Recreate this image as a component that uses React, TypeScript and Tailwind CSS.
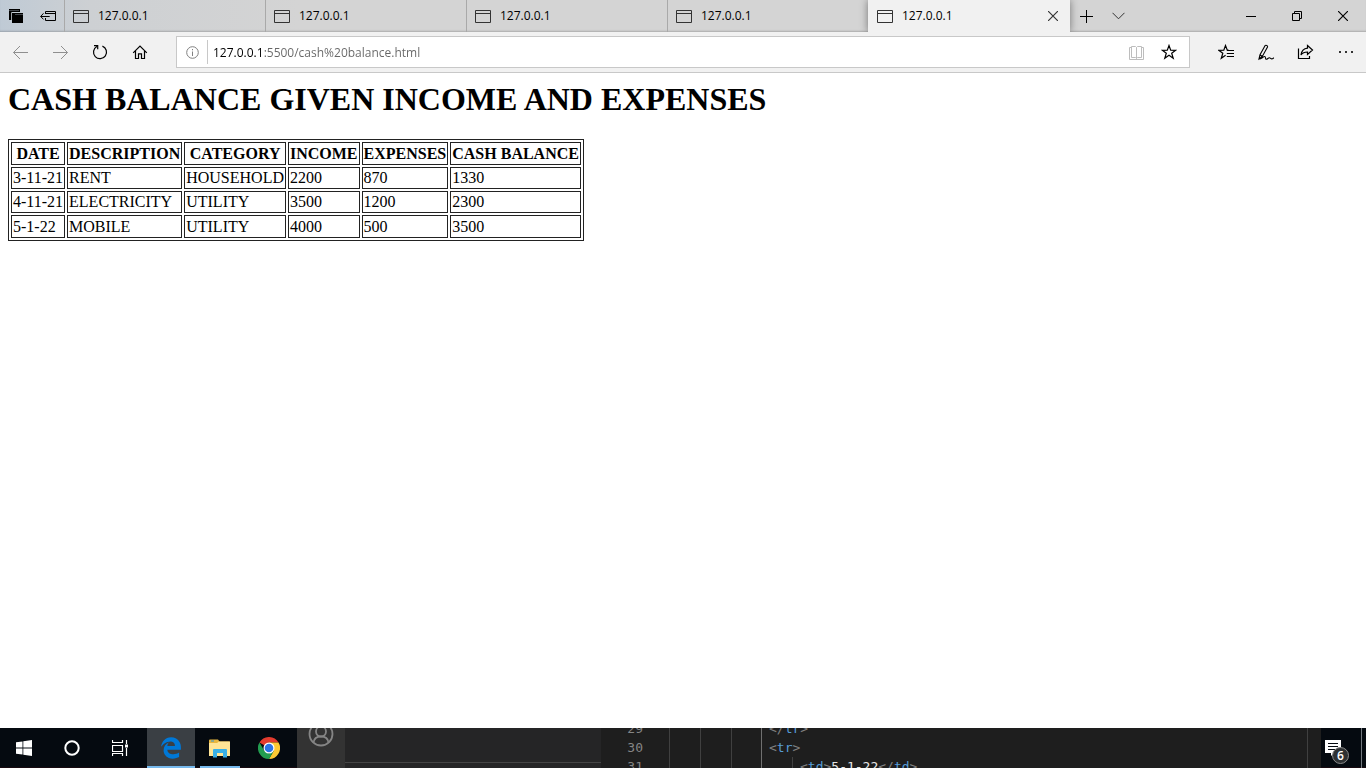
import React from "react";
import { FaEdgeLegacy } from "react-icons/fa6";

const stroke = { fill: "none", stroke: "currentColor" } as const;

function PageIcon() {
  return (
    <svg width="16" height="13" viewBox="0 0 16 13" className="shrink-0 text-[#333333]" {...stroke}>
      <path d="M.5 .5h15v12H.5zM.5 3.5h15" />
    </svg>
  );
}

function CloseIcon({ className = "" }: { className?: string }) {
  return (
    <svg width="10" height="10" viewBox="0 0 10 10" className={className} {...stroke} strokeWidth="1.150">
      <path d="M0 0l10 10M10 0L0 10" />
    </svg>
  );
}

function Tab({ title, active = false }: { title: string; active?: boolean }) {
  return (
    <div
      className={
        active
          ? "z-10 flex w-[202px] min-w-0 items-center border-l border-[#f1f1f1] bg-[#f1f1f1] pl-2 shadow-[0_0_8px_rgba(0,0,0,0.45)]"
          : "flex w-[201px] min-w-0 items-center border-l border-[#a9a9a9] pl-2"
      }
    >
      <button role="tab" aria-selected={active} className="flex flex-1 items-center gap-2 text-left text-xs text-black">
        <PageIcon />
        <span className="pl-px">{title}</span>
      </button>
      {active && (
        <button aria-label="Close tab" className="flex h-8 w-[34px] items-center justify-center">
          <CloseIcon className="text-[#333333]" />
        </button>
      )}
    </div>
  );
}

function TitleBar() {
  return (
    <header className="flex h-8 overflow-hidden bg-[linear-gradient(90deg,#bfcad5_0px,#cdd0d3_90px,#d4d4d4_300px)] shadow-[inset_0_-2px_2px_-1px_rgba(0,0,0,0.2)]">
      <button aria-label="Tabs you have set aside" className="flex w-8 items-center justify-center">
        <svg width="16" height="16" viewBox="0 0 16 16">
          <path d="M1 1h11v3H4v8H1z" fill="#000" />
          <path d="M4 5h11v10H4z" fill="#000" />
          <path d="M1 2.500h10M7 6.500h8" stroke="#6f767d" strokeWidth=".6" />
          <path d="M3.500 12V4.500h9" stroke="#c3cbd3" strokeWidth=".8" fill="none" />
        </svg>
      </button>
      <button aria-label="Set these tabs aside" className="flex w-8 items-center justify-center">
        <svg width="16" height="14" viewBox="0 0 16 14" {...stroke}>
          <path d="M5.500 5V2.500h10v9h-10V9M5.500 4.500h10M.7 7.500h9M3.500 4.300L.7 7.500l2.800 2.900" />
        </svg>
      </button>
      <div role="tablist" className="flex min-w-0">
        <Tab title="127.0.0.1" />
        <Tab title="127.0.0.1" />
        <Tab title="127.0.0.1" />
        <Tab title="127.0.0.1" />
        <Tab title="127.0.0.1" active />
      </div>
      <button aria-label="New tab" className="flex w-8 items-center justify-center">
        <svg width="13" height="13" viewBox="0 0 13 13" {...stroke}>
          <path d="M6.500 0v13M0 6.500h13" />
        </svg>
      </button>
      <button aria-label="Show tab previews" className="flex w-8 items-center justify-center">
        <svg width="13" height="8" viewBox="0 0 13 8" className="text-[#333333]" {...stroke}>
          <path d="M.5 .8l6 6 6-6" />
        </svg>
      </button>
      <div className="ml-auto flex">
        <button aria-label="Minimize" className="flex w-[46px] items-center justify-center">
          <svg width="10" height="1" viewBox="0 0 10 1"><path d="M0 0h10v1H0z" /></svg>
        </button>
        <button aria-label="Restore" className="flex w-[46px] items-center justify-center">
          <svg width="10" height="10" viewBox="0 0 10 10" {...stroke}>
            <path d="M.5 2.500h7v7h-7zM2.500 2.500v-2h7v7h-2" />
          </svg>
        </button>
        <button aria-label="Close window" className="flex w-[46px] items-center justify-center">
          <CloseIcon />
        </button>
      </div>
    </header>
  );
}

function ToolButton({ label, children }: { label: string; children: React.ReactNode }) {
  return (
    <button aria-label={label} className="flex h-10 w-10 shrink-0 items-center justify-center">
      {children}
    </button>
  );
}

function Toolbar() {
  return (
    <nav className="flex h-[41px] items-start border-b border-[#c8c8c8] bg-[#f1f1f1]">
      <ToolButton label="Back">
        <svg width="16" height="14" viewBox="0 0 16 14" className="text-[#8f8f8f]" {...stroke}>
          <path d="M16 7.500H1.500M8 1L1.500 7.500 8 14" />
        </svg>
      </ToolButton>
      <ToolButton label="Forward">
        <svg width="16" height="14" viewBox="0 0 16 14" className="text-[#8f8f8f]" {...stroke}>
          <path d="M1 7.500h14.500M9 1l6.500 6.500L9 14" />
        </svg>
      </ToolButton>
      <ToolButton label="Refresh">
        <svg width="16" height="16" viewBox="0 0 16 16" {...stroke} strokeWidth="1.200">
          <path d="M10.400 2.100A6.500 6.500 0 1 1 4.800 2.500M2 1.600h3.700v3.700" />
        </svg>
      </ToolButton>
      <ToolButton label="Home">
        <svg width="16" height="16" viewBox="0 0 16 16" {...stroke} strokeWidth="1.200">
          <path d="M1.200 8.800L8 2l6.800 6.800M3.500 7v7.500h3V9.800h3v4.700h3V7" />
        </svg>
      </ToolButton>
      <div className="mx-4 mt-1 flex h-8 min-w-0 flex-1 items-center border border-[#c8c8c8] bg-white">
        <button aria-label="Site information" className="flex h-6 w-[30px] shrink-0 items-center justify-center">
          <svg width="13" height="13" viewBox="0 0 13 13" className="text-[#808080]" {...stroke}>
            <circle cx="6.500" cy="6.500" r="5.800" />
            <path d="M6.500 5.500V10M6.500 3v1.300" />
          </svg>
        </button>
        <input
          aria-label="Address"
          defaultValue="127.0.0.1:5500/cash%20balance.html"
          spellCheck={false}
          className="h-6 min-w-0 flex-1 border-l border-[#c8c8c8] bg-[linear-gradient(90deg,#000000_56px,#666666_56px)] bg-clip-text pl-[5px] text-xs text-transparent outline-none"
        />
        <button aria-label="Reading view" className="flex h-7 w-8 shrink-0 items-center justify-center">
          <svg width="16" height="15" viewBox="0 0 16 15" className="text-[#bdbdbd]" {...stroke}>
            <path d="M2.500 2.500h-2v12h14v-12h-2M2.500 1.500h4l1 1 1-1h4v11h-4l-1 1-1-1h-4zM7.500 2.500v11" />
          </svg>
        </button>
        <button aria-label="Add to favorites" className="mr-1 flex h-7 w-8 shrink-0 items-center justify-center">
          <svg width="16" height="16" viewBox="0 0 16 16" {...stroke} strokeWidth="1.200">
            <path d="M8 1.500l1.700 4.700 5 .1-4 3 1.500 4.900L8 11.300l-4.200 2.900 1.500-4.900-4-3 5-.1z" />
          </svg>
        </button>
      </div>
      <ToolButton label="Favorites">
        <svg width="16" height="16" viewBox="0 0 16 16" {...stroke} strokeWidth="1.200">
          <path d="M10.500 6.200H9.300L7.500 1.500 5.800 6.200l-5 .1 4 3-1.500 4.900 4.300-3M8.800 6.500H16M8.800 9.500H16M8.800 12.500H16" />
        </svg>
      </ToolButton>
      <ToolButton label="Add notes">
        <svg width="18" height="17" viewBox="0 0 18 17" {...stroke} strokeWidth="1.100">
          <path d="M2 15l1-4.200L8 1.700c.8-1 3-.1 2.500 1.300L5.300 12.500zM3 10.800l2.300 1.700M2 15c2 .5 4-2.500 5.700-2.500 1.400 0 .2 2.800 1.500 2.800 1.500 0 1.800-1.500 3.200-1.500 1.300 0 1.300 1.500 3 1 .7-.2 1-.7 1.300-1.200" />
        </svg>
      </ToolButton>
      <ToolButton label="Share">
        <svg width="18" height="16" viewBox="0 0 18 16" {...stroke} strokeWidth="1.200">
          <path d="M1.500 4.500v10h11v-2.500M10.500 1.500l5 4.500-5 4.500V8c-3 0-5 .8-6.500 3 .5-4 2.500-6.500 6.500-6.900z" />
        </svg>
      </ToolButton>
      <ToolButton label="Settings and more">
        <svg width="14" height="2" viewBox="0 0 14 2"><path d="M0 0h2v2H0zM6 0h2v2H6zM12 0h2v2h-2z" fill="#333" /></svg>
      </ToolButton>
    </nav>
  );
}

const headings = ["DATE", "DESCRIPTION", "CATEGORY", "INCOME", "EXPENSES", "CASH BALANCE"];
const rows = [
  ["3-11-21", "RENT", "HOUSEHOLD", "2200", "870", "1330"],
  ["4-11-21", "ELECTRICITY", "UTILITY", "3500", "1200", "2300"],
  ["5-1-22", "MOBILE", "UTILITY", "4000", "500", "3500"],
];

function CashPage() {
  return (
    <main className="flex-1 bg-white px-2 pt-2 font-['Liberation_Serif',serif] text-black">
      <h1 className="text-[32px] leading-[37px] font-bold">CASH BALANCE GIVEN INCOME AND EXPENSES</h1>
      <table className="mt-[21px] border-separate border-spacing-[2px] border border-[#222222] text-base">
        <thead>
          <tr>
            {headings.map((h) => (
              <th key={h} scope="col" className="border border-[#222222] p-px text-center leading-[19px] font-bold">{h}</th>
            ))}
          </tr>
        </thead>
        <tbody>
          {rows.map((row) => (
            <tr key={row[0]} className="leading-[18px] last:leading-[19px]">
              {row.map((cell, i) => (
                <td key={i} className="border border-[#222222] p-px">{cell}</td>
              ))}
            </tr>
          ))}
        </tbody>
      </table>
    </main>
  );
}

function Guides() {
  return (
    <>
      <span className="ml-[26px] w-[31px] border-l border-[#404040]" />
      <span className="w-[31px] border-l border-[#404040]" />
      <span className="w-[30px] border-l border-[#404040]" />
    </>
  );
}

function Tag({ name, closing = false }: { name: string; closing?: boolean }) {
  return (
    <>
      <span className="text-[#808080]">{closing ? "</" : "<"}</span>
      <span className="text-[#569cd6]">{name}</span>
      <span className="text-[#808080]">{">"}</span>
    </>
  );
}

function CodeLine({ number, nested = false, children }: { number: number; nested?: boolean; children: React.ReactNode }) {
  return (
    <div className="flex h-[19px] shrink-0">
      <span className="w-[42px] text-right text-[#858585]">{number}</span>
      <Guides />
      <span className={nested ? "w-[31px] border-l border-[#707070]" : "border-l border-[#707070] pl-[7px]"}>{!nested && children}</span>
      {nested && <span className="border-l border-[#404040] pl-[7px] text-[#e4e4e4]">{children}</span>}
    </div>
  );
}

function EditorStrip() {
  return (
    <div className="flex min-w-0 flex-1">
      <div className="flex w-12 shrink-0 items-start justify-center overflow-hidden bg-[#333333]">
        <svg width="26" height="20" viewBox="0 7 26 20" className="text-[#858585]" {...stroke} strokeWidth="1.800">
          <circle cx="13" cy="13" r="11.500" />
          <circle cx="13" cy="10.500" r="5" />
          <path d="M5.500 21.500c.5-4 3-6 7.500-6s7 2 7.500 6" />
        </svg>
      </div>
      <div className="flex w-64 shrink-0 flex-col justify-end bg-[#252526] pb-[5px]">
        <div className="border-t border-[#454545]" />
      </div>
      <div className="flex h-10 min-w-0 flex-1 flex-col justify-center overflow-hidden bg-[#1e1e1e] pb-0.5 font-['DejaVu_Sans_Mono',monospace] text-[13px] leading-[19px] whitespace-pre">
        <CodeLine number={29}><Tag name="tr" closing /></CodeLine>
        <CodeLine number={30}><Tag name="tr" /></CodeLine>
        <CodeLine number={31} nested><Tag name="td" />5-1-22<Tag name="td" closing /></CodeLine>
      </div>
      <div className="w-3.5 shrink-0 border-l border-[#404040] bg-[#1e1e1e]" />
    </div>
  );
}

function Taskbar() {
  return (
    <footer className="flex h-10 overflow-hidden bg-[#050a10] shadow-[inset_0_-1px_0_#180a10]">
      <button aria-label="Start" className="flex w-12 items-center justify-center">
        <svg width="16" height="16" viewBox="0 0 16 16" fill="#fff">
          <path d="M0 2.300L6.500 1.400v6.200H0zM7.300 1.300L16 0v7.600H7.300zM0 8.400h6.500v6.200L0 13.700zM7.300 8.400H16V16l-8.700-1.300z" />
        </svg>
      </button>
      <button aria-label="Search" className="flex w-12 items-center justify-center text-white">
        <svg width="16" height="16" viewBox="0 0 16 16" {...stroke} strokeWidth="2"><circle cx="8" cy="8" r="6.700" /></svg>
      </button>
      <button aria-label="Task view" className="mr-[3px] flex w-12 items-center justify-center text-white">
        <svg width="16" height="16" viewBox="0 0 16 16" {...stroke}>
          <path d="M.5 0v2.500h10V0M.5 5.500h10v6H.5zM.5 16v-2.500h10V16M14.500 0v4M14.500 8v8" strokeWidth="1.200" />
          <path d="M13 4.500h3v3h-3z" fill="currentColor" stroke="none" />
        </svg>
      </button>
      <button aria-label="Microsoft Edge" className="mr-px flex w-12 items-center justify-center border-b-2 border-[#76b9ed] bg-[#3a3f44] pt-0.5">
        <FaEdgeLegacy size={22} color="#0078d7" />
      </button>
      <button aria-label="File Explorer" className="flex w-12 justify-center px-1">
        <span className="flex h-10 w-10 items-center justify-center border-b-2 border-[#76b9ed] pt-0.5">
          <svg width="22" height="19" viewBox="0 0 22 19">
            <path d="M0 1.500Q0 .5 1 .5h8l1.500 2H20q1 0 1 1V17H0z" fill="#e8b63f" />
            <path d="M2 1.500h3v1H2z" fill="#2f9be0" />
            <path d="M0 4h8l2-1.500h11V17H0z" fill="#ffe596" />
            <path d="M4 18.500V11q0-1 1-1h12q1 0 1 1v7.500h-4V14H8v4.500z" fill="#38b0e8" />
          </svg>
        </span>
      </button>
      <button aria-label="Google Chrome" className="mr-1 ml-px flex w-12 items-center justify-center">
        <svg width="22" height="22" viewBox="0 0 22 22">
          <path d="M1.470 5.500A11 11 0 0 1 20.530 5.500H11L6.200 8.200z" fill="#e33b2e" />
          <path d="M20.530 5.500A11 11 0 0 1 11 22L15.760 13.750 11 5.500z" fill="#fcc934" />
          <path d="M11 22A11 11 0 0 1 1.470 5.500L6.240 13.750 11 16.500 15.760 13.750z" fill="#229d50" />
          <circle cx="11" cy="11" r="5.500" fill="#fff" />
          <circle cx="11" cy="11" r="4.300" fill="#2b74e8" />
        </svg>
      </button>
      <EditorStrip />
      <button aria-label="6 new notifications" className="relative mr-1 flex w-[41px] shrink-0 justify-start border-r border-[#73797f] pt-3 pl-1">
        <svg width="16" height="16" viewBox="0 0 16 16">
          <path d="M0 0h16v13H9l-3 3v-3H0z" fill="#fff" />
          <path d="M3 3.500h10M3 6.500h10M3 9.500h7" stroke="#050a10" />
        </svg>
        <span className="absolute top-[19px] left-[11px] flex h-[17px] w-[17px] items-center justify-center rounded-full border border-[#8a8a8a] bg-[#2e3133] text-xs leading-none font-semibold text-white">
          6
        </span>
      </button>
    </footer>
  );
}

export default function App() {
  return (
    <div className="flex min-h-screen flex-col bg-white font-['Open_Sans','Noto_Sans',sans-serif] text-black">
      <TitleBar />
      <Toolbar />
      <CashPage />
      <Taskbar />
    </div>
  );
}
